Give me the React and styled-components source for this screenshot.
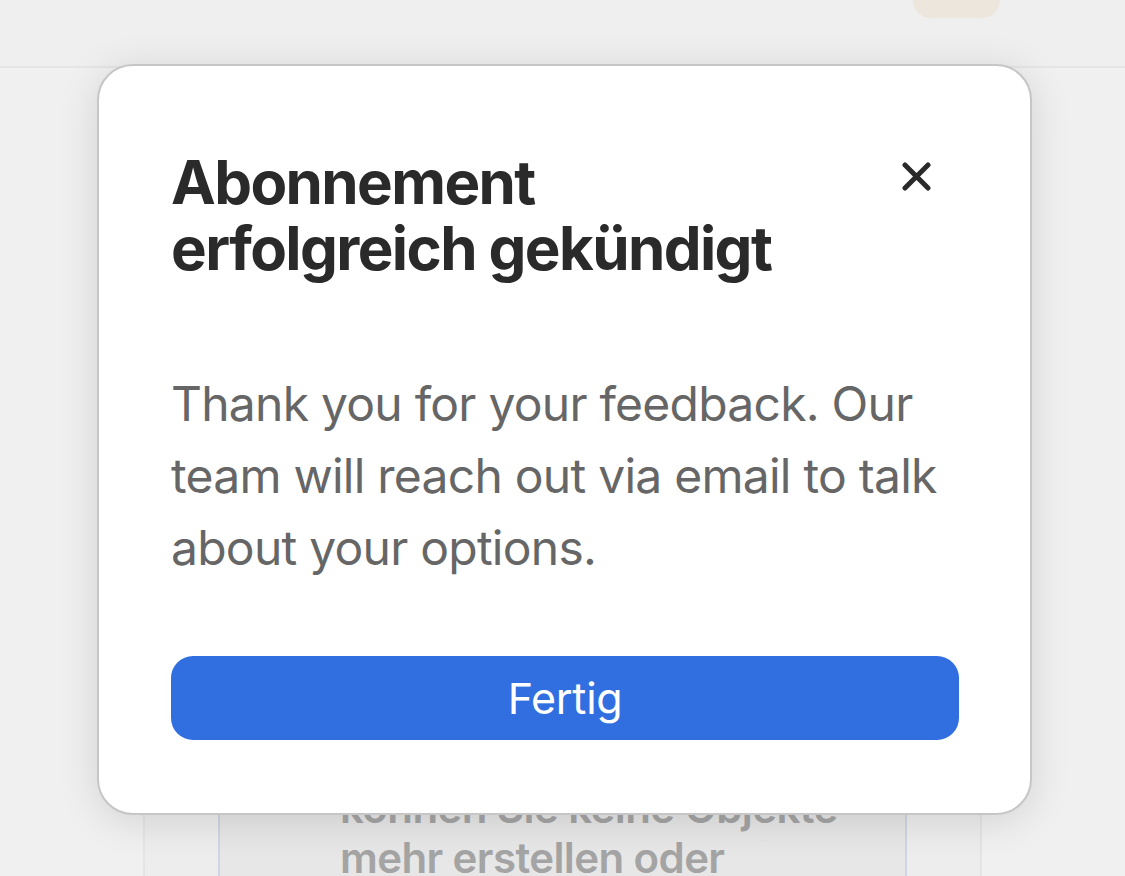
import React from 'react';
import styled, { createGlobalStyle } from 'styled-components';

const GlobalStyle = createGlobalStyle`
  html, body {
    margin: 0;
    padding: 0;
    height: 100%;
    overflow: hidden;
  }
  body {
    background: #efefef;
    font-family: Inter, "Noto Sans", "Liberation Sans", sans-serif;
    -webkit-font-smoothing: antialiased;
  }
`

const App = () => {
  return (
    <Page>
      <GlobalStyle />
      <Header>
        <Badge />
      </Header>

      <Main>
        <Card>
          <Notice>
            <NoticeText>
              Nach der Kündigung
              <br />
              können Sie keine Objekte
              <br />
              mehr erstellen oder
            </NoticeText>
          </Notice>
        </Card>
      </Main>

      <Backdrop>
        <Modal role="dialog" aria-labelledby="modal-title">
          <ModalHeader>
            <Title id="modal-title">
              Abonnement erfolgreich gekündigt
            </Title>
            <CloseButton aria-label="Schließen">
              <svg width="29" height="29" viewBox="0 0 29 29">
                <path
                  d="M3 3 L26 26 M26 3 L3 26"
                  stroke="#2a2a2a"
                  strokeWidth="5"
                  strokeLinecap="round"
                  fill="none"
                />
              </svg>
            </CloseButton>
          </ModalHeader>

          <Message>
            Thank you for your feedback. Our team will reach out via email to talk about your options.
          </Message>

          <DoneButton>Fertig</DoneButton>
        </Modal>
      </Backdrop>
    </Page>
  )
}

const Page = styled.div`
  position: relative;
  height: 876px;
  overflow: hidden;
  background: #f0f0f0;
`

const Header = styled.header`
  height: 68px;
  box-sizing: border-box;
  background: #efefef;
  border-bottom: 2px solid #e5e5e5;
  display: flex;
  justify-content: flex-end;
  padding-right: 125px;
`

const Badge = styled.div`
  width: 87px;
  height: 18px;
  background: #ece6dc;
  border-radius: 0 0 22px 22px;
`

const Main = styled.main`
  padding: 40px 0 0 143px;
`

const Card = styled.section`
  width: 839px;
  height: 900px;
  box-sizing: border-box;
  background: #ededed;
  border-left: 2px solid #e4e4e4;
  border-right: 2px solid #e4e4e4;
  padding: 560px 73px 0 73px;
`

const Notice = styled.div`
  box-sizing: border-box;
  height: 400px;
  background: linear-gradient(#dcdcdc, #e6e6e6 30%, #e9e9e9);
  border: 2px solid #cdd6e4;
  border-radius: 12px;
  padding: 63px 40px 0 120px;
`

const NoticeText = styled.p`
  margin: 0;
  font-size: 42px;
  line-height: 50px;
  font-weight: 600;
  letter-spacing: -0.6px;
  color: #a4a4a4;
  white-space: nowrap;
`

const Backdrop = styled.div`
  position: absolute;
  inset: 0;
  display: flex;
  justify-content: center;
  align-items: flex-start;
  padding: 64px 0 0 4px;
`

const Modal = styled.div`
  width: 935px;
  box-sizing: border-box;
  background: #ffffff;
  border: 2px solid #c6c6c6;
  border-radius: 36px;
  padding: 83px 71px 73px 72px;
  box-shadow: 0 6px 40px rgba(0, 0, 0, 0.12);
  display: flex;
  flex-direction: column;
`

const ModalHeader = styled.div`
  display: flex;
  align-items: flex-start;
  justify-content: space-between;
`

const Title = styled.h2`
  margin: 0;
  max-width: 640px;
  font-size: 60px;
  line-height: 66px;
  font-weight: 700;
  letter-spacing: -1.6px;
  color: #2a2a2a;
`

const CloseButton = styled.button`
  margin: 13px 28px 0 0;
  padding: 0;
  border: none;
  background: none;
  width: 29px;
  height: 29px;
  display: flex;
  cursor: pointer;
`

const Message = styled.p`
  margin: 87px 0 0 0;
  font-size: 48px;
  line-height: 72px;
  font-weight: 400;
  letter-spacing: -0.75px;
  color: #666666;
`

const DoneButton = styled.button`
  margin-top: 72px;
  height: 84px;
  border: none;
  border-radius: 22px;
  background: #316fe1;
  color: #ffffff;
  font-family: inherit;
  font-size: 43px;
  font-weight: 400;
  letter-spacing: -0.3px;
  cursor: pointer;
`

export default App;
